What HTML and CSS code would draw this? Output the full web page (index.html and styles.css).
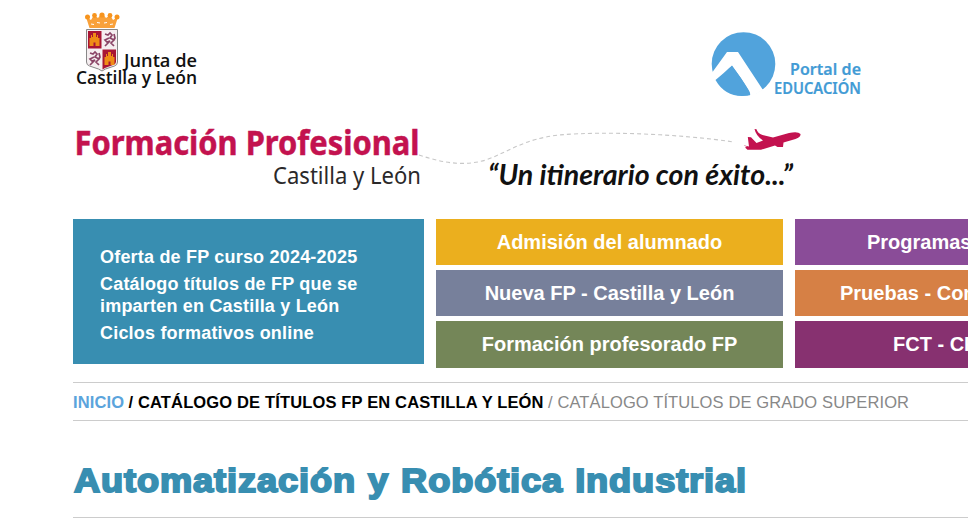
FILE: index.html
```html
<!DOCTYPE html>
<html lang="es">
<head>
<meta charset="utf-8">
<title>Automatización y Robótica Industrial</title>
<link rel="stylesheet" href="styles.css">
</head>
<body>
<div class="page">
  <header class="top">
    <svg class="junta" width="130" height="80" viewBox="73 10 130 80" role="img" aria-label="Junta de Castilla y León">
      <path d="M89.500 28 86 17l5 3 3-5 4 3 4-5 4 5 4-3 3 5 5-3-3.500 11Z" fill="#f9a13a"/>
      <g fill="#f7941d"><circle cx="87.500" cy="17" r="2.500"/><circle cx="94.500" cy="15.500" r="2.400"/><circle cx="102" cy="15" r="2.600"/><circle cx="110" cy="15.500" r="2.400"/><circle cx="117" cy="17" r="2.500"/></g>
      <path d="M91 24l3 .5M97 22.500l3 .5M104 23l3-.5M110 24.500l3-.5" fill="none" stroke="#fff" stroke-width="1"/>
      <path d="M86.500 29.500h31V62q0 3-3 4l-9 3-3.500 2-3.500-2-9-3q-3-1-3-4Z" fill="#f5eef0" stroke="#888" stroke-width="1"/>
      <path d="M88 31h13.500v17.500H88Z" fill="#a91534"/>
      <path d="M102.500 49.500H116V62q0 2-3 3l-8 3-2.500 1.500Z" fill="#a91534"/>
      <g fill="#ef8c17"><path id="castle" d="M89.500 46h10V38h-1.500v-3h-1v2h-1v-4h-3v4h-1v-2h-1v3h-1.500Z"/><use href="#castle" x="15" y="19"/></g>
      <g fill="#a91534"><path d="M93.500 42.500h2V46h-2ZM108.500 61.500h2V65h-2Z"/></g>
      <path id="lion" d="M105 34l3 1 2-2 2 2-2 3 4 2-3 3 3 3M109 38l-4 2 2 2 3-1-3 3-2 2M113 41l2-3-1-4" fill="none" stroke="#8b4567" stroke-width="1.700"/>
      <use href="#lion" x="-15" y="19"/>
      <text class="junta-text" x="124" y="67" textLength="73" lengthAdjust="spacingAndGlyphs">Junta de</text>
      <text class="junta-text" x="76" y="84" textLength="121" lengthAdjust="spacingAndGlyphs">Castilla y León</text>
    </svg>
    <svg class="portal" width="156" height="70" viewBox="710 30 156 70" role="img" aria-label="Portal de Educación">
      <circle cx="743.500" cy="64" r="31.800" fill="#51a3dc"/>
      <path d="M710 75.500 727 52h11l25 38-14 8q3-3-1-9-6-10-16-23-6 4-15 18Z" fill="#fff"/>
      <path d="M715.500 80Q724 73 732 65.500q9 12 16 24 3 5 0 6-22 3-32.500-15.500Z" fill="#51a3dc"/>
      <text class="portal-text" x="790" y="75" textLength="71">Portal de</text>
      <text class="portal-text" x="774" y="94" textLength="87" lengthAdjust="spacingAndGlyphs">EDUCACIÓN</text>
    </svg>
  </header>
  <svg class="banner" width="740" height="80" viewBox="73 120 740 80" role="img" aria-label="Formación Profesional Castilla y León">
    <text class="brand" x="74.500" y="155" textLength="345" lengthAdjust="spacingAndGlyphs">Formación Profesional</text>
    <text class="region" x="273" y="184" textLength="148" lengthAdjust="spacingAndGlyphs">Castilla y León</text>
    <path d="M419 155C440 162 462 167 486 160C510 151 524 139 559 135C605 131 680 134 734 142" fill="none" stroke="#c8c8c8" stroke-width="1.100" stroke-dasharray="4 3"/>
    <path d="M744.500 145.500l4.500 1-1.200-9.500 3.200.2 5.500 5.800 6.500-2.500q-7-4.500-8.500-11.500l2 .2q1 4 6 5.800l10.500 2.500 16-4.500q9-2 11.500 1 .5 3-5 5l-12 3.500-.5 4.500h-5.500l-2.500-1.500-14 4.200h-13.500l-2.500-2.200 2-.8-3-1Z" fill="#c3124f"/>
    <text class="motto" x="488" y="185" textLength="305" lengthAdjust="spacingAndGlyphs">“Un itinerario con éxito...”</text>
  </svg>

  <nav class="menu">
    <ul class="tile offers">
      <li>Oferta de FP curso 2024-2025</li>
      <li>Catálogo títulos de FP que se imparten en Castilla y León</li>
      <li>Ciclos formativos online</li>
    </ul>
    <div class="column">
      <a class="tile amber">Admisión del alumnado</a>
      <a class="tile slate">Nueva FP - Castilla y León</a>
      <a class="tile olive">Formación profesorado FP</a>
    </div>
    <div class="column last">
      <a class="tile purple cut-programs">Programas</a>
      <a class="tile orange cut-exams">Pruebas - Con</a>
      <a class="tile plum cut-fct">FCT - CF</a>
    </div>
  </nav>

  <nav class="crumbs"><svg width="840" height="24" role="img" aria-label="Ruta">
    <text class="crumb home" x="0" y="18" textLength="51">INICIO</text>
    <text class="crumb" x="55.500" y="18" textLength="415">/ CATÁLOGO DE TÍTULOS FP EN CASTILLA Y LEÓN</text>
    <text class="crumb current" x="475" y="18" textLength="361">/ CATÁLOGO TÍTULOS DE GRADO SUPERIOR</text>
  </svg></nav>
  <h1 class="title"><svg width="700" height="50"><text x="1" y="36" textLength="673" lengthAdjust="spacingAndGlyphs">Automatización y Robótica Industrial</text></svg></h1>
</div>
</body>
</html>
```
FILE: styles.css
```css
* { box-sizing: border-box; }
body {
  margin: 0;
  height: 525px;
  overflow: hidden;
  background: #fff;
  font-family: "Liberation Sans", Arial, sans-serif;
}
svg { display: block; }
.page { margin-left: 73px; padding-top: 10px; }
.top { display: flex; height: 110px; }
.portal { margin: 20px 0 0 507px; }
.junta-text { font: 600 17.5px "Open Sans", sans-serif; fill: #111; }
.portal-text { font: 600 16px "Noto Sans", sans-serif; fill: #429bd5; stroke: #429bd5; stroke-width: .2px; }
.brand { font: 700 34px "Noto Sans", sans-serif; fill: #c3124f; stroke: #c3124f; stroke-width: .5px; }
.region { font: 400 24px "Noto Sans", sans-serif; fill: #2b292a; }
.motto { font: italic 700 28px Lato, cursive; fill: #111; }

.menu { display: flex; gap: 12px; margin-top: 19px; align-items: flex-start; }
.tile { color: #fff; font-weight: bold; }
.offers {
  flex: none;
  width: 351px;
  height: 145px;
  margin: 0;
  padding: 27px 40px 0 27px;
  list-style: none;
  background: #388eb1;
  font-size: 18px;
  letter-spacing: .2px;
  line-height: 22px;
}
.offers li { margin-bottom: 5px; }
.column { flex: none; width: 347px; display: grid; grid-template-rows: 46px 46px 47px; gap: 5px; }
.column .tile { display: block; text-align: center; font-size: 20px; line-height: 46px; }
.last { flex: 1; width: auto; min-width: 0; }
.last .tile { text-align: left; white-space: nowrap; overflow: hidden; }
.amber { background: #ebaf1e; }
.slate { background: #77809b; }
.olive { background: #748658; }
.purple { background: #8a4c98; }
.orange { background: #d68045; }
.plum { background: #873170; }
.cut-programs { padding-left: 72px; }
.cut-exams { padding-left: 45px; }
.cut-fct { padding-left: 98px; }

.crumbs { height: 39px; margin-top: 14px; padding-top: 7px; border: solid #ccc; border-width: 1px 0; }
.crumb { font-size: 16.5px; font-weight: bold; fill: #000; }
.home { fill: #5ba4dc; }
.current { font-weight: normal; fill: #888; }
.title { height: 97px; margin: 0; padding-top: 35px; border-bottom: 1px solid #ccc; }
.title text { font-size: 32.5px; font-weight: bold; letter-spacing: .8px; word-spacing: 1px; fill: #388eb1; stroke: #388eb1; stroke-width: 1.9px; }
```
